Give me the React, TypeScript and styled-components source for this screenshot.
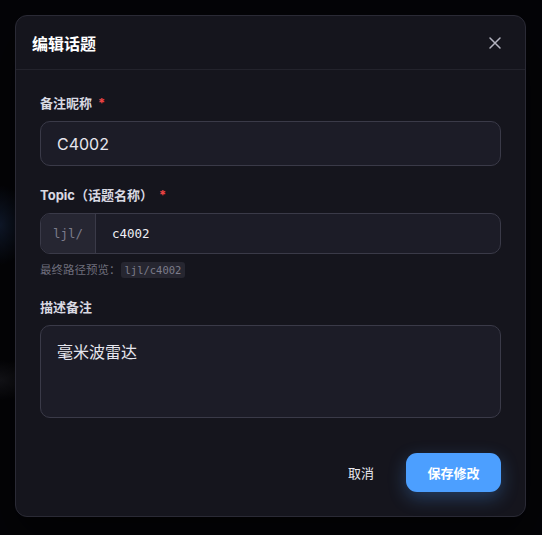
import React from 'react';
import styled, { createGlobalStyle } from 'styled-components';

const GlobalStyle = createGlobalStyle`
  html, body {
    margin: 0;
    padding: 0;
    background: #040407;
  }
  * {
    box-sizing: border-box;
  }
`;

const Overlay = styled.div`
  width: 542px;
  height: 535px;
  padding: 15px 16px 18px 15px;
  display: flex;
  align-items: flex-start;
  background:
    radial-gradient(ellipse 30px 40px at 0px 225px, rgba(40, 70, 120, 0.35), transparent),
    radial-gradient(ellipse 40px 20px at 0px 380px, rgba(60, 60, 70, 0.3), transparent),
    #040407;
  font-family: Inter, 'Noto Sans CJK SC', sans-serif;
`;

const Modal = styled.div`
  width: 511px;
  height: 502px;
  background: #15151d;
  border: 1px solid #2a2a35;
  border-radius: 12px;
  display: flex;
  flex-direction: column;
  box-shadow: 0 20px 50px rgba(0, 0, 0, 0.6);
`;

const Header = styled.div`
  height: 54px;
  padding: 0 16px;
  display: flex;
  align-items: center;
  justify-content: space-between;
  border-bottom: 1px solid #23232c;
`;

const Title = styled.h2`
  margin: 0;
  font-size: 16px;
  font-weight: 700;
  color: #ffffff;
`;

const CloseButton = styled.button`
  width: 24px;
  height: 24px;
  padding: 0;
  margin-right: 2px;
  border: none;
  background: transparent;
  color: #b4b4c0;
  display: flex;
  align-items: center;
  justify-content: center;
  cursor: pointer;
`;

const Body = styled.div`
  padding: 24px 24px 0;
  display: flex;
  flex-direction: column;
`;

const Field = styled.div<{ $gap?: number }>`
  display: flex;
  flex-direction: column;
  margin-bottom: ${p => p.$gap ?? 20}px;
`;

const Label = styled.label`
  font-size: 13px;
  line-height: 18px;
  font-weight: 700;
  color: #d9d9e2;
  margin-bottom: 9px;
  display: flex;
  gap: 4px;
`;

const Required = styled.span`
  color: #ef4444;
  margin-left: 2px;
`;

const TextInput = styled.div`
  height: 45px;
  padding: 0 16px;
  display: flex;
  align-items: center;
  background: #1c1c27;
  border: 1px solid #3a3a48;
  border-radius: 10px;
  font-size: 16px;
  color: #e6e6ee;
`;

const InputGroup = styled.div`
  height: 41px;
  display: flex;
  background: #1c1c27;
  border: 1px solid #3a3a48;
  border-radius: 10px;
  overflow: hidden;
`;

const Prefix = styled.div`
  width: 55px;
  display: flex;
  align-items: center;
  justify-content: center;
  background: #262632;
  border-right: 1px solid #3a3a48;
  font-family: 'DejaVu Sans Mono', monospace;
  font-size: 12.5px;
  color: #7c7c8a;
`;

const MonoValue = styled.div`
  padding: 0 16px;
  display: flex;
  align-items: center;
  font-family: 'DejaVu Sans Mono', monospace;
  font-size: 12.5px;
  color: #f0f0f5;
`;

const Hint = styled.div`
  margin-top: 7px;
  font-size: 11.5px;
  line-height: 18px;
  color: #6e6e7c;
  display: flex;
  align-items: center;
`;

const Code = styled.code`
  padding: 1px 4px;
  background: #262630;
  border-radius: 3px;
  font-family: 'DejaVu Sans Mono', monospace;
  font-size: 10.5px;
  line-height: 14px;
  color: #7c7c8a;
`;

const TextArea = styled.div`
  height: 93px;
  padding: 14px 16px;
  background: #1c1c27;
  border: 1px solid #3a3a48;
  border-radius: 10px;
  font-size: 16px;
  line-height: 24px;
  color: #e6e6ee;
`;

const Footer = styled.div`
  padding: 35px 24px 0;
  display: flex;
  justify-content: flex-end;
  align-items: center;
  gap: 32px;
`;

const GhostButton = styled.button`
  border: none;
  background: transparent;
  padding: 0;
  font-family: inherit;
  font-size: 13px;
  color: #e8e8ee;
  cursor: pointer;
`;

const PrimaryButton = styled.button`
  width: 95px;
  height: 39px;
  border: none;
  border-radius: 11px;
  background: #4c9fff;
  color: #ffffff;
  font-family: inherit;
  font-size: 13px;
  font-weight: 700;
  cursor: pointer;
  box-shadow: 0 6px 18px rgba(76, 159, 255, 0.3);
`;

const CloseIcon = () => (
  <svg width="14" height="14" viewBox="0 0 14 14" fill="none">
    <path d="M2 2L12 12M12 2L2 12" stroke="currentColor" strokeWidth="1.5" strokeLinecap="round" />
  </svg>
);

const EditTopicModal: React.FC = () => {
  return (
    <Overlay>
      <Modal>
        <Header>
          <Title>编辑话题</Title>
          <CloseButton aria-label="关闭">
            <CloseIcon />
          </CloseButton>
        </Header>

        <Body>
          <Field>
            <Label>
              备注昵称<Required>*</Required>
            </Label>
            <TextInput>C4002</TextInput>
          </Field>

          <Field $gap={19}>
            <Label>
              Topic（话题名称）<Required>*</Required>
            </Label>
            <InputGroup>
              <Prefix>ljl/</Prefix>
              <MonoValue>c4002</MonoValue>
            </InputGroup>
            <Hint>
              最终路径预览：<Code>ljl/c4002</Code>
            </Hint>
          </Field>

          <Field $gap={0}>
            <Label>描述备注</Label>
            <TextArea>毫米波雷达</TextArea>
          </Field>
        </Body>

        <Footer>
          <GhostButton>取消</GhostButton>
          <PrimaryButton>保存修改</PrimaryButton>
        </Footer>
      </Modal>
    </Overlay>
  );
};

export default function App() {
  return (
    <>
      <GlobalStyle />
      <EditTopicModal />
    </>
  );
}
